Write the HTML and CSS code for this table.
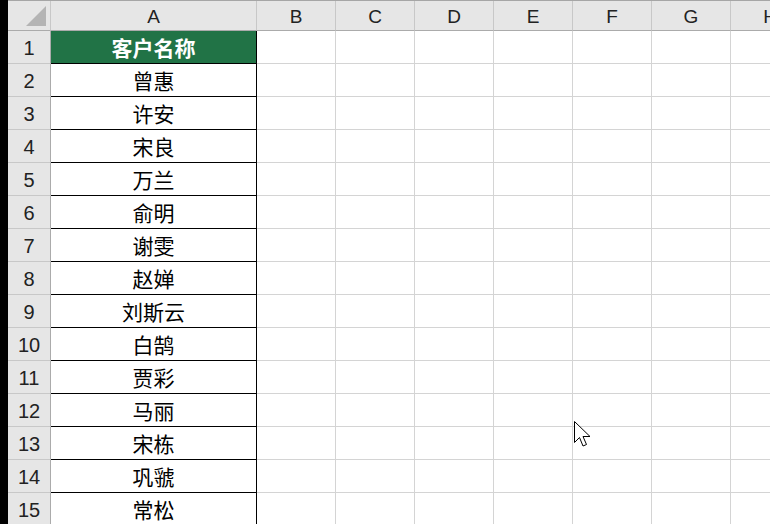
FILE: index.html
```html
<!DOCTYPE html>
<html lang="zh">
<head>
<meta charset="utf-8">
<link rel="stylesheet" href="styles.css">
</head>
<body>
<div class="frame">
  <div class="sheet">
    <div class="corner"><span class="tri"></span></div>
    <div class="colhead">A</div>
    <div class="colhead">B</div>
    <div class="colhead">C</div>
    <div class="colhead">D</div>
    <div class="colhead">E</div>
    <div class="colhead">F</div>
    <div class="colhead">G</div>
    <div class="colhead">H</div>

    <div class="rowhead">1</div><div class="cell a title">客户名称</div><div class="cell"></div><div class="cell"></div><div class="cell"></div><div class="cell"></div><div class="cell"></div><div class="cell"></div><div class="cell"></div>
    <div class="rowhead">2</div><div class="cell a">曾惠</div><div class="cell"></div><div class="cell"></div><div class="cell"></div><div class="cell"></div><div class="cell"></div><div class="cell"></div><div class="cell"></div>
    <div class="rowhead">3</div><div class="cell a">许安</div><div class="cell"></div><div class="cell"></div><div class="cell"></div><div class="cell"></div><div class="cell"></div><div class="cell"></div><div class="cell"></div>
    <div class="rowhead">4</div><div class="cell a">宋良</div><div class="cell"></div><div class="cell"></div><div class="cell"></div><div class="cell"></div><div class="cell"></div><div class="cell"></div><div class="cell"></div>
    <div class="rowhead">5</div><div class="cell a">万兰</div><div class="cell"></div><div class="cell"></div><div class="cell"></div><div class="cell"></div><div class="cell"></div><div class="cell"></div><div class="cell"></div>
    <div class="rowhead">6</div><div class="cell a">俞明</div><div class="cell"></div><div class="cell"></div><div class="cell"></div><div class="cell"></div><div class="cell"></div><div class="cell"></div><div class="cell"></div>
    <div class="rowhead">7</div><div class="cell a">谢雯</div><div class="cell"></div><div class="cell"></div><div class="cell"></div><div class="cell"></div><div class="cell"></div><div class="cell"></div><div class="cell"></div>
    <div class="rowhead">8</div><div class="cell a">赵婵</div><div class="cell"></div><div class="cell"></div><div class="cell"></div><div class="cell"></div><div class="cell"></div><div class="cell"></div><div class="cell"></div>
    <div class="rowhead">9</div><div class="cell a">刘斯云</div><div class="cell"></div><div class="cell"></div><div class="cell"></div><div class="cell"></div><div class="cell"></div><div class="cell"></div><div class="cell"></div>
    <div class="rowhead">10</div><div class="cell a">白鹄</div><div class="cell"></div><div class="cell"></div><div class="cell"></div><div class="cell"></div><div class="cell"></div><div class="cell"></div><div class="cell"></div>
    <div class="rowhead">11</div><div class="cell a">贾彩</div><div class="cell"></div><div class="cell"></div><div class="cell"></div><div class="cell"></div><div class="cell"></div><div class="cell"></div><div class="cell"></div>
    <div class="rowhead">12</div><div class="cell a">马丽</div><div class="cell"></div><div class="cell"></div><div class="cell"></div><div class="cell"></div><div class="cell"></div><div class="cell"></div><div class="cell"></div>
    <div class="rowhead">13</div><div class="cell a">宋栋</div><div class="cell"></div><div class="cell"></div><div class="cell"></div><div class="cell"></div><div class="cell"></div><div class="cell"></div><div class="cell"></div>
    <div class="rowhead">14</div><div class="cell a">巩虢</div><div class="cell"></div><div class="cell"></div><div class="cell"></div><div class="cell"></div><div class="cell"></div><div class="cell"></div><div class="cell"></div>
    <div class="rowhead">15</div><div class="cell a">常松</div><div class="cell"></div><div class="cell"></div><div class="cell"></div><div class="cell"></div><div class="cell"></div><div class="cell"></div><div class="cell"></div>
  </div>
  <svg class="pointer" width="20" height="28" viewBox="0 0 20 28">
    <path d="M0.5 0.5 L0.5 21.5 L5.5 16.5 L9 25 L12.5 23.5 L9 15.5 L16 15.5 Z" fill="#fff" stroke="#000" stroke-width="1" stroke-linejoin="miter"/>
  </svg>
</div>
</body>
</html>
```

FILE: styles.css
```css
html, body {
  margin: 0;
  padding: 0;
  background: #000;
}
body {
  width: 770px;
  height: 524px;
  overflow: hidden;
}
.frame {
  position: relative;
  margin-left: 8px;
  width: 762px;
  height: 524px;
  overflow: hidden;
  background: #fff;
  border-top: 1px solid #a6a6a6;
  box-sizing: border-box;
}
.sheet {
  display: grid;
  grid-template-columns: 43px 206px repeat(7, 79px);
  grid-template-rows: 30px repeat(15, 33px);
  width: 802px;
}
.sheet > div {
  box-sizing: border-box;
  display: flex;
  align-items: center;
  justify-content: center;
}
.corner {
  background: #e6e6e6;
  border-right: 1px solid #c8c8c8;
  border-bottom: 1px solid #ababab;
  position: relative;
}
.tri {
  position: absolute;
  right: 4px;
  bottom: 4px;
  width: 0;
  height: 0;
  border-left: 20px solid transparent;
  border-bottom: 20px solid #b4b4b4;
}
.colhead {
  background: #e6e6e6;
  border-right: 1px solid #c8c8c8;
  border-bottom: 1px solid #ababab;
  font-family: "Liberation Sans", Arial, sans-serif;
  font-size: 19px;
  color: #222;
  padding-top: 2px;
}
.rowhead {
  background: #e6e6e6;
  border-right: 1px solid #ababab;
  border-bottom: 1px solid #c8c8c8;
  font-family: "Liberation Sans", Arial, sans-serif;
  font-size: 20px;
  color: #222;
  padding-top: 2px;
}
.cell {
  border-right: 1px solid #d4d4d4;
  border-bottom: 1px solid #d4d4d4;
}
.cell.a {
  border-right: 1px solid #000;
  border-bottom: 1px solid #000;
  font-family: "Noto Sans CJK SC", "Noto Sans", sans-serif;
  font-size: 21px;
  color: #000;
}
.cell.title {
  background: #217346;
  color: #fff;
  font-weight: bold;
  font-size: 21px;
}
.pointer {
  position: absolute;
  left: 566px;
  top: 420px;
}
```
